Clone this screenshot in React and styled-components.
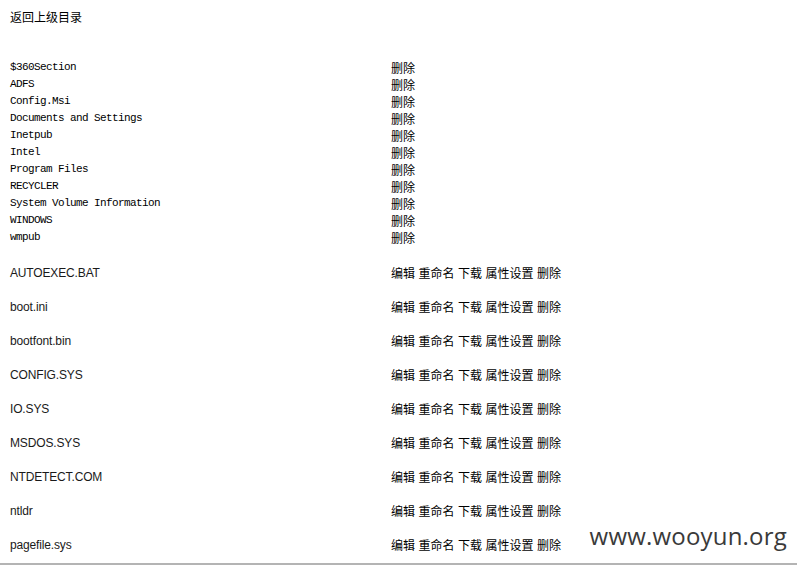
import React from "react";
import styled, { createGlobalStyle } from "styled-components";

const GlobalStyle = createGlobalStyle`
  html, body {
    margin: 0;
    padding: 0;
    background: #fff;
  }
  body {
    font-family: "Liberation Sans", "Noto Sans CJK SC", sans-serif;
    color: #000;
  }
`;

const Page = styled.div`
  position: relative;
  width: 797px;
  height: 565px;
  overflow: hidden;
  box-sizing: border-box;
  padding-left: 10px;
  border-bottom: 2px solid #b4b4b4;
`;

const BackLink = styled.div`
  height: 34px;
  line-height: 34px;
  font-size: 12px;
  font-family: "Noto Sans CJK SC", sans-serif;
  margin-bottom: 25px;
`;

const List = styled.div`
  display: grid;
  grid-template-columns: 381px auto;
  margin-bottom: ${(p) => p.$gap || 0}px;
`;

const Name = styled.div`
  height: ${(p) => p.$h}px;
  line-height: ${(p) => p.$h}px;
  font-family: ${(p) =>
    p.$mono ? `"Liberation Mono", monospace` : `"Liberation Sans", sans-serif`};
  font-size: ${(p) => (p.$mono ? 11 : 12)}px;
  letter-spacing: ${(p) => (p.$mono ? -0.6 : -0.15)}px;
  color: ${(p) => (p.$mono ? "#000" : "#1a1a1a")};
  white-space: pre;
`;

const Actions = styled.div`
  display: flex;
  gap: 3.5px;
  height: ${(p) => p.$h}px;
  line-height: ${(p) => p.$h}px;
  font-family: "Noto Sans CJK SC", sans-serif;
  font-size: 12px;
  white-space: pre;
`;

const Action = styled.span`
  color: #000;
  cursor: pointer;
`;

const Watermark = styled.div`
  position: absolute;
  right: 10px;
  bottom: 12px;
  font-family: "Open Sans", sans-serif;
  font-size: 24px;
  line-height: 30px;
  color: #3a3a3a;
  letter-spacing: 0.2px;
`;

const dirs = [
  "$360Section",
  "ADFS",
  "Config.Msi",
  "Documents and Settings",
  "Inetpub",
  "Intel",
  "Program Files",
  "RECYCLER",
  "System Volume Information",
  "WINDOWS",
  "wmpub",
];

const files = [
  "AUTOEXEC.BAT",
  "boot.ini",
  "bootfont.bin",
  "CONFIG.SYS",
  "IO.SYS",
  "MSDOS.SYS",
  "NTDETECT.COM",
  "ntldr",
  "pagefile.sys",
];

const fileActions = ["编辑", "重命名", "下载", "属性设置", "删除"];

export default function App() {
  return (
    <>
      <GlobalStyle />
      <Page>
        <BackLink>返回上级目录</BackLink>
        <List $gap={10}>
          {dirs.map((d) => (
            <React.Fragment key={d}>
              <Name $mono $h={17}>{d}</Name>
              <Actions $h={17}>
                <Action>删除</Action>
              </Actions>
            </React.Fragment>
          ))}
        </List>
        <List>
          {files.map((f) => (
            <React.Fragment key={f}>
              <Name $h={34}>{f}</Name>
              <Actions $h={34}>
                {fileActions.map((a) => (
                  <Action key={a}>{a}</Action>
                ))}
              </Actions>
            </React.Fragment>
          ))}
        </List>
        <Watermark>www.wooyun.org</Watermark>
      </Page>
    </>
  );
}
